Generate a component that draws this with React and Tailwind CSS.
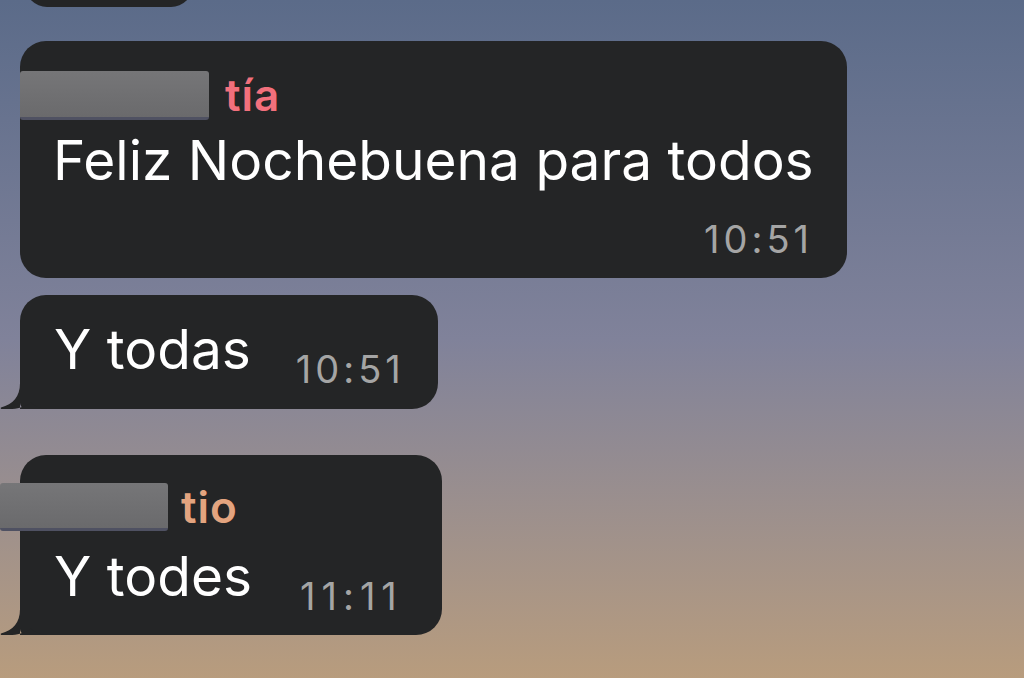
import React from 'react';

const Tail = () => (
  <svg className="absolute left-[-20px] bottom-0" width="50" height="40" viewBox="0 0 50 40">
    <path d="M20 0 L20 14 C20 28 13 35 1 38.5 C0.5 39 0.5 40 2 40 C14 41 25 38.5 31 33.5 C35 37.5 41 40 50 40 L20 40 Z" fill="#242526" />
  </svg>
);

const Redacted = ({ className }) => (
  <div className={`bg-gradient-to-b from-[#767678] to-[#6a6a6c] border-b-[3px] border-[#4f5162] rounded-[3px] ${className}`} />
);

export default function App() {
  return (
    <div
      className="w-[1024px] h-[678px] overflow-hidden bg-gradient-to-b from-[#5b6b89] via-[#80829a] to-[#b89c7d] relative"
      style={{ fontFamily: 'Inter, "Liberation Sans", sans-serif' }}
    >
      {/* previous bubble bottom */}
      <div className="ml-[25px] mt-[-30px] w-[168px] h-[37px] bg-[#242526] rounded-b-[22px]" />

      {/* tía */}
      <div className="ml-[20px] mt-[34px] w-[827px] h-[237px] bg-[#242526] rounded-[26px] pl-[33px] pt-[30px] pr-[36px]">
        <div className="flex items-center h-[49px] ml-[-33px]">
          <Redacted className="w-[189px] h-[49px]" />
          <span className="ml-[16px] text-[44px] leading-[49px] font-semibold tracking-[1px] text-[#f2707c]">tía</span>
        </div>
        <div className="mt-[10px] text-[55px] leading-[60px] text-white whitespace-nowrap">Feliz Nochebuena para todos</div>
        <div className="mt-[29px] text-right text-[38px] leading-[40px] tracking-[4px] mr-[-2px] text-[#a5a5a5]">10:51</div>
      </div>

      {/* Y todas */}
      <div className="relative ml-[20px] mt-[17px] w-[418px] h-[114px] bg-[#242526] rounded-[26px] rounded-bl-[6px] pl-[34px] pt-[24px] flex items-start">
        <span className="text-[55px] leading-[60px] text-white whitespace-nowrap">Y todas</span>
        <span className="ml-[45px] mt-[30px] text-[38px] leading-[40px] tracking-[4px] text-[#a5a5a5]">10:51</span>
        <Tail />
      </div>

      {/* tio */}
      <div className="relative ml-[20px] mt-[46px] w-[422px] h-[180px] bg-[#242526] rounded-[26px] rounded-bl-[6px] pl-[34px] pt-[28px]">
        <div className="flex items-center h-[48px] ml-[-54px]">
          <Redacted className="w-[168px] h-[48px]" />
          <span className="ml-[13px] text-[44px] leading-[48px] font-semibold tracking-[1px] text-[#e3a47f]">tio</span>
        </div>
        <div className="flex items-start mt-[15px]">
          <span className="text-[55px] leading-[60px] text-white whitespace-nowrap">Y todes</span>
          <span className="ml-[48px] mt-[30px] text-[38px] leading-[40px] tracking-[6px] text-[#a5a5a5]">11:11</span>
        </div>
        <Tail />
      </div>
    </div>
  );
}
